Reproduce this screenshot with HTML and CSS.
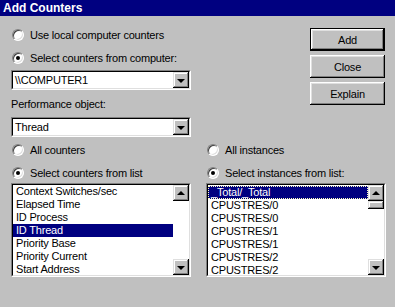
FILE: index.html
```html
<html lang="en">
  <head>
    <meta charset="UTF-8" />
    <title>Add Counters</title>
    <link rel="stylesheet" href="styles.css">
  </head>

  <body>
    <div class="window">
      <div class="titlebar">Add Counters</div>

      <div class="top">
        <div class="left-panel">
          <div class="radio-row radio-row--first"><span class="radio"></span>Use local computer counters</div>
          <div class="radio-row"><span class="radio radio--on"></span>Select counters from computer:</div>
          <div class="sunken combo">
            <div class="sunken__inner">
              <span class="combo__text">\\COMPUTER1</span>
              <span class="raised combo__btn"><span class="arrow-down"></span></span>
            </div>
          </div>
          <div class="field-label">Performance object:</div>
          <div class="sunken combo">
            <div class="sunken__inner">
              <span class="combo__text">Thread</span>
              <span class="raised combo__btn"><span class="arrow-down"></span></span>
            </div>
          </div>
        </div>

        <div class="buttons">
          <div class="btn btn--default"><span class="btn__face">Add</span></div>
          <div class="btn"><span class="btn__face">Close</span></div>
          <div class="btn"><span class="btn__face">Explain</span></div>
        </div>
      </div>

      <div class="lists">
        <div class="list-col">
          <div class="radio-row"><span class="radio"></span>All counters</div>
          <div class="radio-row"><span class="radio radio--on"></span>Select counters from list</div>
          <div class="sunken listbox">
            <div class="sunken__inner">
              <div class="items">
                <div class="item">Context Switches/sec</div>
                <div class="item">Elapsed Time</div>
                <div class="item">ID Process</div>
                <div class="item item--sel">ID Thread</div>
                <div class="item">Priority Base</div>
                <div class="item">Priority Current</div>
                <div class="item">Start Address</div>
              </div>
              <div class="scrollbar">
                <span class="raised scroll-btn"><span class="arrow-up"></span></span>
                <span class="scroll-track"></span>
                <span class="raised scroll-btn"><span class="arrow-down"></span></span>
              </div>
            </div>
          </div>
        </div>

        <div class="list-col">
          <div class="radio-row"><span class="radio"></span>All instances</div>
          <div class="radio-row"><span class="radio radio--on"></span>Select instances from list:</div>
          <div class="sunken listbox">
            <div class="sunken__inner">
              <div class="items items--low">
                <div class="item item--sel item--focus">_Total/_Total</div>
                <div class="item">CPUSTRES/0</div>
                <div class="item">CPUSTRES/0</div>
                <div class="item">CPUSTRES/1</div>
                <div class="item">CPUSTRES/1</div>
                <div class="item">CPUSTRES/2</div>
                <div class="item">CPUSTRES/2</div>
              </div>
              <div class="scrollbar">
                <span class="raised scroll-btn"><span class="arrow-up"></span></span>
                <span class="raised scroll-thumb"></span>
                <span class="scroll-track"></span>
                <span class="raised scroll-btn"><span class="arrow-down"></span></span>
              </div>
            </div>
          </div>
        </div>
      </div>
    </div>
  </body>
</html>
```

FILE: styles.css
```css
* {
  box-sizing: border-box;
}
body {
  margin: 0;
}
.window {
  width: 395px;
  height: 307px;
  background-color: #c0c0c0;
  font-family: "Liberation Sans", Arial, sans-serif;
  font-size: 11px;
  letter-spacing: -0.2px;
  color: #000;
  overflow: hidden;
}

.titlebar {
  height: 16px;
  line-height: 16px;
  padding-left: 3px;
  background-color: #000080;
  color: #fff;
  font-weight: bold;
  font-size: 12px;
  letter-spacing: 0;
}

.top {
  display: flex;
  padding-left: 11px;
  padding-right: 10px;
}
.left-panel {
  width: 180px;
  padding-top: 12px;
}

.radio-row {
  display: flex;
  align-items: center;
  gap: 6px;
  height: 13px;
  padding-left: 1px;
  white-space: nowrap;
}
.radio-row + .radio-row {
  margin-top: 10px;
}
.radio {
  position: relative;
  flex: none;
  width: 12px;
  height: 12px;
  border-radius: 50%;
  background-color: #fff;
  border: 1px solid;
  border-color: #808080 #fff #fff #808080;
  box-shadow: inset 1px 1px #404040, inset -1px -1px #dfdfdf;
}
.radio--on::after {
  content: "";
  position: absolute;
  left: 3px;
  top: 3px;
  width: 4px;
  height: 4px;
  border-radius: 50%;
  background-color: #000;
}

.sunken {
  border: 1px solid;
  border-color: #808080 #fff #fff #808080;
}
.sunken__inner {
  display: flex;
  height: 100%;
  border: 1px solid;
  border-color: #000 #dfdfdf #dfdfdf #000;
  background-color: #fff;
}
.raised {
  display: flex;
  align-items: center;
  justify-content: center;
  background-color: #c0c0c0;
  box-shadow: inset -1px -1px #000, inset 1px 1px #dfdfdf, inset -2px -2px #808080, inset 2px 2px #fff;
}

.combo {
  height: 20px;
  margin-top: 6px;
}
.combo__text {
  flex: 1;
  line-height: 16px;
  padding-left: 2px;
}
.combo__btn {
  width: 16px;
  height: 16px;
}
.arrow-down,
.arrow-up {
  width: 0;
  height: 0;
  border-left: 4px solid transparent;
  border-right: 4px solid transparent;
}
.arrow-down {
  border-top: 4px solid #000;
  margin-top: 1px;
}
.arrow-up {
  border-bottom: 4px solid #000;
  margin-top: -1px;
}

.field-label {
  height: 13px;
  line-height: 13px;
  margin-top: 8px;
}

.buttons {
  display: flex;
  flex-direction: column;
  gap: 4px;
  width: 75px;
  margin-left: auto;
  margin-top: 12px;
}
.btn {
  height: 23px;
}
.btn__face {
  display: flex;
  align-items: center;
  justify-content: center;
  height: 100%;
  background-color: #c0c0c0;
  box-shadow: inset -1px -1px #000, inset 1px 1px #fff, inset -2px -2px #808080, inset 2px 2px #dfdfdf;
}
.btn--default {
  border: 1px solid #000;
}

.lists {
  display: grid;
  grid-template-columns: 180px 180px;
  column-gap: 15px;
  padding-left: 11px;
  margin-top: 6px;
}
.listbox {
  height: 94px;
  margin-top: 4px;
}
.items {
  flex: 1;
  overflow: hidden;
}
.items--low {
  padding-top: 1px;
}
.item {
  height: 13px;
  line-height: 13px;
  padding-left: 3px;
  white-space: nowrap;
}
.item--sel {
  background-color: #000080;
  color: #fff;
}
.item--focus {
  outline: 1px dotted #ffffc0;
  outline-offset: -1px;
}
.scrollbar {
  display: flex;
  flex-direction: column;
  width: 16px;
}
.scroll-btn {
  height: 16px;
}
.scroll-thumb {
  height: 8px;
}
.scroll-track {
  flex: 1;
  background-color: #fff;
}
```
